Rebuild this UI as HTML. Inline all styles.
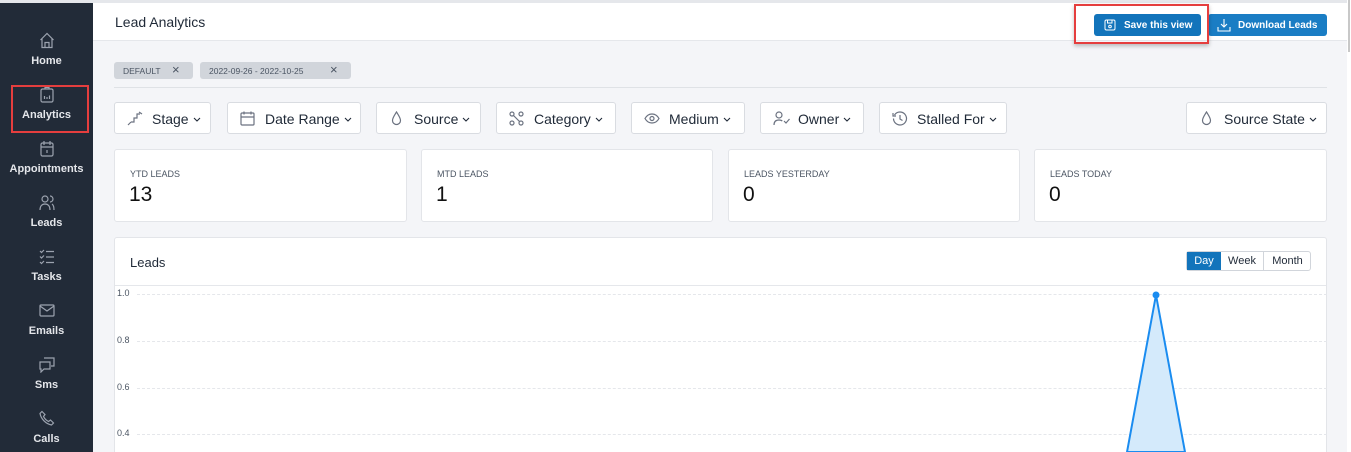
<!DOCTYPE html>
<html><head><style>
*{box-sizing:border-box;margin:0;padding:0}
html,body{width:1351px;height:452px;overflow:hidden}
body{background:#f4f5f8;font-family:"Liberation Sans",sans-serif;position:relative;color:#1f2937}
.sb{position:absolute;left:0;top:0;width:93px;height:452px;background:#222b38;border-top:3px solid #e5e7eb}
.ni{position:absolute;left:0;width:93px;text-align:center;color:#e5e7eb;font-size:11px;font-weight:bold}
.ni svg{display:block;margin:0 auto 6px}
.hdr{position:absolute;left:93px;top:0;width:1254px;height:41px;background:#fff;border-top:3px solid #e5e7eb;border-bottom:1px solid #e5e7eb}
.hdr h1{position:absolute;left:22px;top:11px;font-size:14px;font-weight:normal;color:#1f2937}
.btn{position:absolute;top:11px;height:22px;background:#1274bb;color:#fff;font-size:10px;font-weight:bold;border-radius:3px;padding:6px 0 0 30px}
.chip{position:absolute;top:62px;height:17px;background:#d1d5db;border-radius:3px;font-size:8.5px;color:#4b5563;padding:4px 0 0 9px}
.fb{position:absolute;top:102px;height:32px;background:#fff;border:1px solid #d9dce1;border-radius:3px;font-size:14px;color:#1f2937}
.fb svg{position:absolute;left:12px;top:8px}
.fb span{position:absolute;top:8px;white-space:nowrap}
.fb span svg{position:static;display:inline-block;margin-left:4px;vertical-align:2px}
.card{position:absolute;top:149px;height:73px;background:#fff;border:1px solid #e3e5e9;border-radius:3px}
.card .l{position:absolute;left:15px;top:19px;font-size:9px;color:#4b5563}
.card .v{position:absolute;left:14px;top:33px;font-size:21px;color:#111}
.ch{position:absolute;left:114px;top:237px;width:1213px;height:230px;background:#fff;border:1px solid #e3e5e9;border-radius:3px}
.yl{position:absolute;left:117px;font-size:9px;color:#4b5563}
.gl{position:absolute;left:137px;width:1190px;border-top:1px dashed #e5e7eb}
</style></head><body>
<div class="sb">
<div class="ni" style="top:29px"><svg width="16" height="17" viewBox="0 0 16 17" fill="none" stroke="#9ca3af" stroke-width="1.2"><path d="M1.5 8L8 1.5 14.5 8M3 6.5V15.5H13V6.5M6 15.5V10.5H10V15.5"/></svg>Home</div>
<div class="ni" style="top:83px"><svg width="14" height="17" viewBox="0 0 14 17" fill="none" stroke="#9ca3af" stroke-width="1.2"><rect x="1" y="3" width="12" height="13" rx="1.5"/><path d="M5 3V1.5H9V3M4.5 13V10M7 13V11M9.5 13V9.5"/></svg>Analytics</div>
<div style="position:absolute;left:11px;top:82px;width:78px;height:48px;border:2px solid #e53e3e"></div>
<div class="ni" style="top:137px"><svg width="14" height="17" viewBox="0 0 14 17" fill="none" stroke="#9ca3af" stroke-width="1.2"><rect x="1" y="3" width="12" height="13" rx="1.5"/><path d="M4 1V5M10 1V5M1 7H13M7 10V13"/></svg>Appointments</div>
<div class="ni" style="top:191px"><svg width="16" height="17" viewBox="0 0 16 17" fill="none" stroke="#9ca3af" stroke-width="1.2"><circle cx="6" cy="5" r="3"/><path d="M1 16c0-4 2-6 5-6s5 2 5 6M11 2a3 3 0 010 6M13 10c1.5 1 2 3 2 6"/></svg>Leads</div>
<div class="ni" style="top:245px"><svg width="16" height="17" viewBox="0 0 16 17" fill="none" stroke="#9ca3af" stroke-width="1.2"><path d="M1 3l1.5 1.5L5 2M1 8.5l1.5 1.5L5 7.5M1 14l1.5 1.5L5 13M7 3.5H15M7 9H15M7 14.5H15"/></svg>Tasks</div>
<div class="ni" style="top:299px"><svg width="16" height="17" viewBox="0 0 16 17" fill="none" stroke="#9ca3af" stroke-width="1.2"><rect x="1" y="3" width="14" height="11" rx="1"/><path d="M1 4l7 5 7-5"/></svg>Emails</div>
<div class="ni" style="top:353px"><svg width="16" height="17" viewBox="0 0 16 17" fill="none" stroke="#9ca3af" stroke-width="1.2"><path d="M5 2H15V10H12M1 6H11V13H5L2 16V13H1Z"/></svg>Sms</div>
<div class="ni" style="top:407px"><svg width="16" height="17" viewBox="0 0 16 17" fill="none" stroke="#9ca3af" stroke-width="1.2"><path d="M3 1.5l3 3-1.5 2c1 2 3 4 5 5l2-1.5 3 3-2 2C7 14 2 9 1 3.5z"/></svg>Calls</div>
</div>
<div class="hdr"><h1>Lead Analytics</h1>
<div class="btn" style="left:1001px;width:107px"><svg style="position:absolute;left:10px;top:5px" width="12" height="12" viewBox="0 0 12 12" fill="none" stroke="#fff" stroke-width="1"><rect x="1" y="1" width="10" height="10" rx="1.5"/><path d="M3.5 1V4H8V1"/><circle cx="6" cy="7.5" r="1.3"/></svg>Save this view</div>
<div class="btn" style="left:1115px;width:119px;background:#1a7dc4"><svg style="position:absolute;left:9px;top:4px" width="14" height="14" viewBox="0 0 14 14" fill="none" stroke="#fff" stroke-width="1.1"><path d="M7 1V9M4 6l3 3 3-3M1 9V13H13V9"/></svg>Download Leads</div>
</div>
<div style="position:absolute;left:1074px;top:4px;width:135px;height:40px;border:2px solid #e53e3e;box-shadow:0 2px 4px rgba(0,0,0,.25)"></div>
<div style="position:absolute;left:1347px;top:0;width:4px;height:452px;background:#fff"></div>
<div style="position:absolute;left:1348px;top:0;width:2px;height:52px;background:#c8c8c8"></div>
<div class="chip" style="left:114px;width:79px">DEFAULT<span style="position:absolute;left:58px;top:1px;font-size:13px;line-height:13px">×</span></div>
<div class="chip" style="left:200px;width:151px">2022-09-26 - 2022-10-25<span style="position:absolute;left:130px;top:1px;font-size:13px;line-height:13px">×</span></div>
<div style="position:absolute;left:114px;top:87px;width:1213px;border-top:1px solid #dfe2e6"></div>
<div class="fb" style="left:114px;width:97px"><svg width="17" height="15" viewBox="0 0 17 15" fill="none" stroke="#6b7280" stroke-width="1.2"><path d="M1 14l3-3M4 11H7V7H10V3H13M12 1l3 2"/></svg><span style="left:37px">Stage<svg width="8" height="5" viewBox="0 0 8 5" fill="none" stroke="#1f2937" stroke-width="1.1"><path d="M1 1l3 3 3-3"/></svg></span></div>
<div class="fb" style="left:227px;width:134px"><svg width="15" height="15" viewBox="0 0 15 15" fill="none" stroke="#6b7280" stroke-width="1.2"><rect x="1" y="2" width="13" height="12" rx="1"/><path d="M4 0.5V3.5M11 0.5V3.5M1 6H14"/></svg><span style="left:37px">Date Range<svg width="8" height="5" viewBox="0 0 8 5" fill="none" stroke="#1f2937" stroke-width="1.1"><path d="M1 1l3 3 3-3"/></svg></span></div>
<div class="fb" style="left:376px;width:105px"><svg width="15" height="15" viewBox="0 0 15 15" fill="none" stroke="#6b7280" stroke-width="1.2"><path d="M7.5 1C5 5 3.5 7 3.5 9.5a4 4 0 008 0C11.5 7 10 5 7.5 1z"/></svg><span style="left:37px">Source<svg width="8" height="5" viewBox="0 0 8 5" fill="none" stroke="#1f2937" stroke-width="1.1"><path d="M1 1l3 3 3-3"/></svg></span></div>
<div class="fb" style="left:496px;width:120px"><svg width="15" height="15" viewBox="0 0 15 15" fill="none" stroke="#6b7280" stroke-width="1.2"><circle cx="3" cy="3" r="2"/><circle cx="12" cy="3" r="2"/><circle cx="3" cy="12" r="2"/><circle cx="12" cy="12" r="2"/><path d="M4.5 4.5L10.5 10.5"/></svg><span style="left:37px">Category<svg width="8" height="5" viewBox="0 0 8 5" fill="none" stroke="#1f2937" stroke-width="1.1"><path d="M1 1l3 3 3-3"/></svg></span></div>
<div class="fb" style="left:631px;width:114px"><svg width="16" height="15" viewBox="0 0 16 15" fill="none" stroke="#6b7280" stroke-width="1.2"><path d="M1 7.5C3 4 5.5 3 8 3s5 1 7 4.5C13 11 10.5 12 8 12S3 11 1 7.5z"/><circle cx="8" cy="7.5" r="2"/></svg><span style="left:37px">Medium<svg width="8" height="5" viewBox="0 0 8 5" fill="none" stroke="#1f2937" stroke-width="1.1"><path d="M1 1l3 3 3-3"/></svg></span></div>
<div class="fb" style="left:760px;width:104px"><svg width="17" height="15" viewBox="0 0 17 15" fill="none" stroke="#6b7280" stroke-width="1.2"><circle cx="6" cy="4" r="3"/><path d="M1 14c0-3.5 2-5 5-5 1.5 0 2.5.3 3.3 1M11 10l2 2 3.5-4"/></svg><span style="left:37px">Owner<svg width="8" height="5" viewBox="0 0 8 5" fill="none" stroke="#1f2937" stroke-width="1.1"><path d="M1 1l3 3 3-3"/></svg></span></div>
<div class="fb" style="left:879px;width:128px"><svg width="16" height="15" viewBox="0 0 16 15" fill="none" stroke="#6b7280" stroke-width="1.2"><path d="M2.5 4A6.5 6.5 0 118 14 6.5 6.5 0 011.5 7.5M1 2v3h3M8 4v4l2.5 1.5"/></svg><span style="left:37px">Stalled For<svg width="8" height="5" viewBox="0 0 8 5" fill="none" stroke="#1f2937" stroke-width="1.1"><path d="M1 1l3 3 3-3"/></svg></span></div>
<div class="fb" style="left:1186px;width:141px"><svg width="15" height="15" viewBox="0 0 15 15" fill="none" stroke="#6b7280" stroke-width="1.2"><path d="M7.5 1C5 5 3.5 7 3.5 9.5a4 4 0 008 0C11.5 7 10 5 7.5 1z"/></svg><span style="left:37px">Source State<svg width="8" height="5" viewBox="0 0 8 5" fill="none" stroke="#1f2937" stroke-width="1.1"><path d="M1 1l3 3 3-3"/></svg></span></div>
<div class="card" style="left:114px;width:293px"><div class="l">YTD LEADS</div><div class="v">13</div></div>
<div class="card" style="left:421px;width:292px"><div class="l">MTD LEADS</div><div class="v">1</div></div>
<div class="card" style="left:728px;width:292px"><div class="l">LEADS YESTERDAY</div><div class="v">0</div></div>
<div class="card" style="left:1034px;width:293px"><div class="l">LEADS TODAY</div><div class="v">0</div></div>
<div class="ch"><div style="position:absolute;left:15px;top:17px;font-size:13px">Leads</div>
<div style="position:absolute;left:1071px;top:13px;height:20px;width:125px;border:1px solid #d1d5db;border-radius:3px;font-size:11px">
<div style="position:absolute;left:0;top:0;width:34px;height:18px;background:#1274bb;color:#fff;text-align:center;padding-top:3px">Day</div>
<div style="position:absolute;left:34px;top:0;width:43px;height:18px;border-right:1px solid #d1d5db;text-align:center;padding-top:3px">Week</div>
<div style="position:absolute;left:77px;top:0;width:47px;text-align:center;padding-top:3px">Month</div></div>
<div style="position:absolute;left:0;top:47px;width:1211px;border-top:1px solid #e5e7eb"></div></div>
<div class="yl" style="top:288px">1.0</div><div class="gl" style="top:294px"></div>
<div class="yl" style="top:335px">0.8</div><div class="gl" style="top:341px"></div>
<div class="yl" style="top:382px">0.6</div><div class="gl" style="top:388px"></div>
<div class="yl" style="top:428px">0.4</div><div class="gl" style="top:434px"></div>
<svg style="position:absolute;left:0;top:0" width="1351" height="452"><path d="M1127 452L1156 295 1185 452Z" fill="#d4eafb" stroke="#1a8cf0" stroke-width="2"/><circle cx="1156" cy="295" r="3.5" fill="#1a8cf0"/></svg>
</body></html>
